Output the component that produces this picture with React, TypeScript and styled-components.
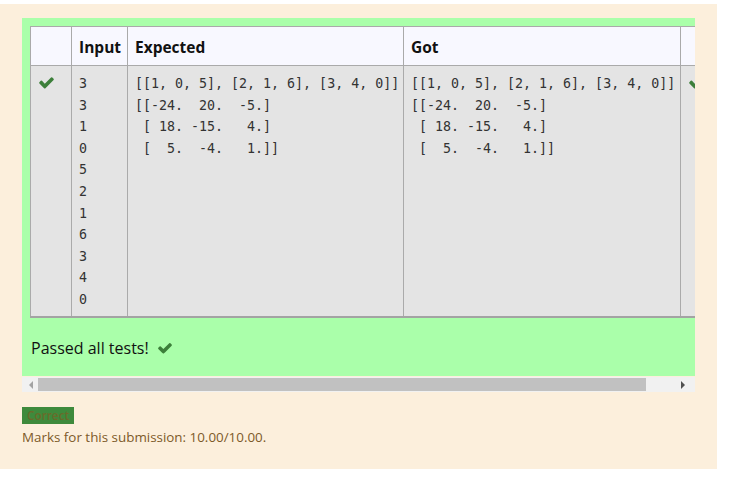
import * as React from "react";
import styled, { createGlobalStyle } from "styled-components";

const GlobalStyle = createGlobalStyle`
  body {
    margin: 0;
    background: #fff;
    font-family: "Open Sans", "Noto Sans", sans-serif;
  }
`;

const inputLines = ["3", "3", "1", "0", "5", "2", "1", "6", "3", "4", "0"];
const output = `[[1, 0, 5], [2, 1, 6], [3, 4, 0]]
[[-24.  20.  -5.]
 [ 18. -15.   4.]
 [  5.  -4.   1.]]`;

function CheckIcon({ size = 17 }: { size?: number }) {
  return (
    <svg width={size} height={size} viewBox="0 0 1792 1792" aria-hidden>
      <path
        fill="#3c7f3a"
        d="M1671 566q0 40-28 68l-724 724-136 136q-28 28-68 28t-68-28l-136-136-362-362q-28-28-28-68t28-68l136-136q28-28 68-28t68 28l294 295 656-657q28-28 68-28t68 28l136 136q28 28 28 68z"
      />
    </svg>
  );
}

export default function App() {
  return (
    <>
      <GlobalStyle />
      <ScOutcome>
        <ScResults>
          <ScScrollArea>
            <ScTable>
              <colgroup>
                <col style={{ width: 41 }} />
                <col style={{ width: 56 }} />
                <col style={{ width: 276 }} />
                <col style={{ width: 277 }} />
                <col style={{ width: 41 }} />
              </colgroup>
              <thead>
                <tr>
                  <ScTh></ScTh>
                  <ScTh>Input</ScTh>
                  <ScTh>Expected</ScTh>
                  <ScTh>Got</ScTh>
                  <ScTh></ScTh>
                </tr>
              </thead>
              <tbody>
                <tr>
                  <ScTd>
                    <ScIconCell>
                      <CheckIcon />
                    </ScIconCell>
                  </ScTd>
                  <ScTd>
                    <ScPre>{inputLines.join("\n")}</ScPre>
                  </ScTd>
                  <ScTd>
                    <ScPre>{output}</ScPre>
                  </ScTd>
                  <ScTd>
                    <ScPre>{output}</ScPre>
                  </ScTd>
                  <ScTd>
                    <ScIconCell>
                      <CheckIcon />
                    </ScIconCell>
                  </ScTd>
                </tr>
              </tbody>
            </ScTable>
            <ScSummary>
              Passed all tests! <CheckIcon size={16} />
            </ScSummary>
          </ScScrollArea>
          <ScScrollbar>
            <ScArrow $dir="left" />
            <ScThumb />
            <ScArrow $dir="right" />
          </ScScrollbar>
        </ScResults>
        <ScBadge>Correct</ScBadge>
        <ScMarks>Marks for this submission: 10.00/10.00.</ScMarks>
      </ScOutcome>
    </>
  );
}

const ScOutcome = styled.div`
  margin-top: 4px;
  width: 717px;
  box-sizing: border-box;
  padding: 14px 22px 23px;
  background: #fcefdc;
  color: #7d5a29;
`;

const ScResults = styled.div`
  width: 673px;
`;

const ScScrollArea = styled.div`
  background: #aaffaa;
  padding: 8px 8px 0;
  overflow: hidden;
  height: 358px;
  box-sizing: border-box;
`;

const ScTable = styled.table`
  border-collapse: collapse;
  table-layout: fixed;
  width: 691px;
  color: #222;
`;

const ScTh = styled.th`
  background: #f8f8ff;
  border: 1px solid #aaa;
  height: 37px;
  padding: 1px 7px 0;
  text-align: left;
  font-size: 15.5px;
  font-weight: 700;
  color: #111;
`;

const ScTd = styled.td`
  background: #e4e4e4;
  border: 1px solid #aaa;
  border-bottom: 2px solid #a3a3a3;
  vertical-align: top;
  padding: 7px 7px 5px;
  height: 238px;
`;

const ScIconCell = styled.div`
  padding-top: 1px;
  line-height: 0;
`;

const ScPre = styled.pre`
  margin: 0;
  font-family: "DejaVu Sans Mono", "Liberation Mono", monospace;
  font-size: 13.3px;
  line-height: 21.6px;
  color: #333;
  white-space: pre;
`;

const ScSummary = styled.div`
  display: flex;
  align-items: center;
  gap: 8px;
  padding: 19px 1px 0;
  font-size: 16px;
  color: #111;
`;

const ScScrollbar = styled.div`
  margin-top: 1px;
  height: 15px;
  background: #f1f1f1;
  display: flex;
  align-items: center;
`;

const ScThumb = styled.div`
  flex: 0 0 608px;
  height: 13px;
  margin-left: 5px;
  background: #c1c1c1;
`;

const ScArrow = styled.div<{ $dir: "left" | "right" }>`
  flex: none;
  width: 0;
  height: 0;
  border-top: 4px solid transparent;
  border-bottom: 4px solid transparent;
  ${(p) =>
    p.$dir === "left"
      ? `border-right: 4px solid #a3a3a3; margin-left: 7px;`
      : `border-left: 4px solid #505050; margin-left: 35px;`}
`;

const ScBadge = styled.span`
  display: inline-block;
  margin-top: 15px;
  padding: 0 5px;
  height: 17px;
  line-height: 17px;
  background: #3e8a3c;
  color: #6a6a2a;
  font-size: 11.8px;
  font-weight: 600;
`;

const ScMarks = styled.div`
  margin-top: 3px;
  font-size: 13.4px;
  line-height: 18px;
`;
